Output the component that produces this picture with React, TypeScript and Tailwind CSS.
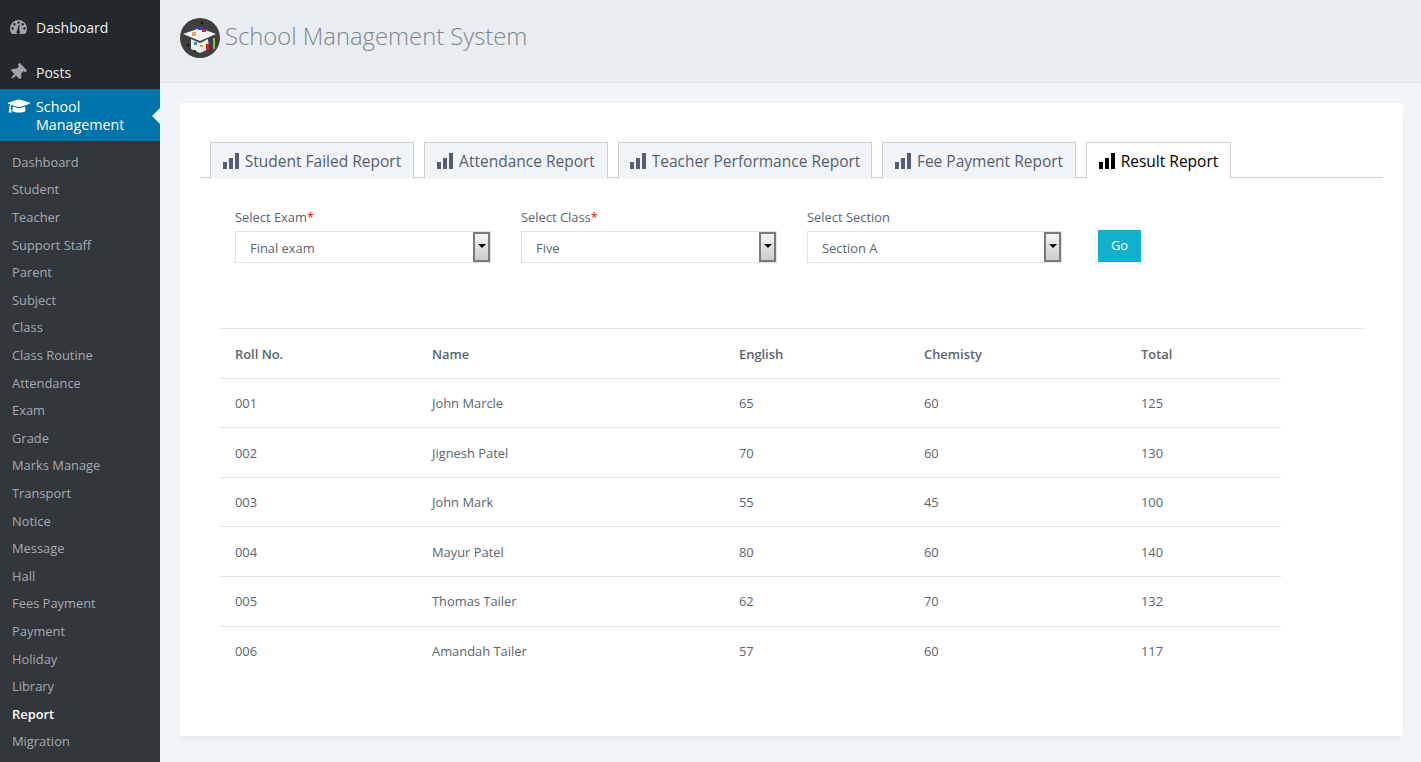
import React from 'react';
import { FaGraduationCap, FaThumbtack } from 'react-icons/fa';

const menu = ['Dashboard', 'Student', 'Teacher', 'Support Staff', 'Parent', 'Subject', 'Class', 'Class Routine', 'Attendance', 'Exam', 'Grade', 'Marks Manage', 'Transport', 'Notice', 'Message', 'Hall', 'Fees Payment', 'Payment', 'Holiday', 'Library', 'Report', 'Migration'];

const tabs = [
  { label: 'Student Failed Report', width: 'w-[204px]' },
  { label: 'Attendance Report', width: 'w-[184px]' },
  { label: 'Teacher Performance Report', width: 'w-[254px]' },
  { label: 'Fee Payment Report', width: 'w-[194px]' },
  { label: 'Result Report', width: 'w-[145px]', active: true },
];

const rows = [
  { height: 'h-[49px]', pad: 'pt-[2px]', cells: ['001', 'John Marcle', '65', '60', '125'] },
  { height: 'h-[50px]', pad: 'pt-[4px]', cells: ['002', 'Jignesh Patel', '70', '60', '130'] },
  { height: 'h-[49px]', pad: 'pt-[2px]', cells: ['003', 'John Mark', '55', '45', '100'] },
  { height: 'h-[50px]', pad: 'pt-[4px]', cells: ['004', 'Mayur Patel', '80', '60', '140'] },
  { height: 'h-[50px]', pad: 'pt-[2px]', cells: ['005', 'Thomas Tailer', '62', '70', '132'] },
  { height: 'h-[50px]', pad: 'pt-0', cells: ['006', 'Amandah Tailer', '57', '60', '117'] },
];

const BarsIcon = () => (
  <svg width="16" height="16" viewBox="0 0 16 16" className="shrink-0" fill="currentColor">
    <rect x="0" y="9" width="4" height="7" />
    <rect x="6" y="5" width="4" height="11" />
    <rect x="12" y="0" width="4" height="16" />
  </svg>
);

const GaugeIcon = () => (
  <svg width="17" height="14" viewBox="0 0 17 14" className="text-[#a0a5aa]">
    <path fill="currentColor" d="M8.5 0A8.5 8.5 0 0 0 0 8.5c0 1.9.6 3.6 1.6 5 .2.3.5.5.9.5h12c.4 0 .7-.2.9-.5 1-1.4 1.6-3.1 1.6-5A8.5 8.5 0 0 0 8.5 0z" />
    <g fill="#23282d">
      <circle cx="8.5" cy="2.6" r="1.2" />
      <circle cx="4.3" cy="4.3" r="1.2" />
      <circle cx="12.7" cy="4.3" r="1.2" />
      <circle cx="2.6" cy="8.5" r="1.2" />
      <circle cx="14.4" cy="8.5" r="1.2" />
      <path d="M7 10.8 8.6 5l1 .2-.3 5.4A1.8 1.8 0 1 1 7 10.8z" />
    </g>
  </svg>
);

const Logo = () => (
  <svg width="40" height="40" viewBox="0 0 40 40" className="shrink-0">
    <circle cx="20" cy="20" r="20" fill="#3f3f3f" />
    <path d="M3 16 20 10 36 16 20 23z" fill="#f4f4f4" />
    <path d="M11 21 20 25 28 21 29 31 20 35 11 31z" fill="#ededed" />
    <rect x="12" y="14" width="4" height="4" fill="#e8a27c" />
    <rect x="18" y="9" width="5" height="3" fill="#2a3fc0" />
    <rect x="22" y="11" width="4" height="3" fill="#d8202a" />
    <rect x="26" y="26" width="3" height="6" fill="#d8202a" />
    <rect x="33" y="20" width="2" height="11" fill="#8bc34a" />
    <rect x="14" y="24" width="3" height="3" fill="#2a8fc0" />
    <rect x="20" y="27" width="3" height="2" fill="#e8a020" />
    <circle cx="8" cy="27" r="1.5" fill="#1a1a1a" />
    <circle cx="22" cy="5" r="1.5" fill="#1a1a1a" />
    <circle cx="15" cy="33" r="1" fill="#1a1a1a" />
  </svg>
);

const SelectField = ({ label, value, required, width }: { label: string; value: string; required?: boolean; width: string }) => (
  <div className={width}>
    <div className="text-[12.9px] leading-[18px] text-[#5a6470] mb-[5px]">
      {label}
      {required && <span className="text-[#ff0000]">*</span>}
    </div>
    <div className="h-[32px] border border-[#dde2e4] flex items-center justify-between pl-[14px] bg-white">
      <span className="text-[12.9px] text-[#5a6470] pt-[3px]">{value}</span>
      <div className="w-[17px] h-[30px] border-2 border-[#7a7a7a] bg-gradient-to-b from-[#f4f4f4] to-[#cccccc] flex items-start justify-center pt-[10px]">
        <div className="w-0 h-0 border-l-[4px] border-r-[4px] border-t-[4px] border-l-transparent border-r-transparent border-t-black" />
      </div>
    </div>
  </div>
);

export default function App() {
  return (
    <div className="h-[762px] w-full flex overflow-hidden bg-[#f1f4f9] font-['Open_Sans',sans-serif]">
      {/* Sidebar */}
      <aside className="w-[160px] shrink-0 bg-[#32373c] flex flex-col">
        <div className="bg-[#23282d] h-[89px] text-[14px] text-[#eeeeee]">
          <div className="h-[54px] flex items-center pl-[10px] gap-[9px]">
            <GaugeIcon />
            <span>Dashboard</span>
          </div>
          <div className="h-[35px] flex items-center pl-[9px] gap-[10px] pt-[1px]">
            <FaThumbtack className="text-[#a0a5aa] rotate-45 w-[17px] h-[17px]" />
            <span>Posts</span>
          </div>
        </div>
        <div className="relative bg-[#0073aa] h-[52px] flex text-[14.3px] leading-[18px] text-white pl-[8px] pt-[9px] gap-[8px]">
          <FaGraduationCap className="w-[22px] h-[18px] -mt-[1px] shrink-0" />
          <span className="-ml-[2px]">School<br />Management</span>
          <div className="absolute right-0 top-[19px] w-0 h-0 border-y-[8px] border-r-[8px] border-y-transparent border-r-[#f1f4f9]" />
        </div>
        <nav className="pt-[7.9px]">
          {menu.map((item) => (
            <div key={item} className={`h-[27.6px] leading-[27.6px] pl-[12px] text-[12.9px] ${item === 'Report' ? 'text-white font-semibold' : 'text-[#a5aab0]'}`}>
              {item}
            </div>
          ))}
        </nav>
      </aside>

      <main className="flex-1 min-w-0">
        {/* Header */}
        <header className="h-[83px] bg-[#e9ecf1] border-b border-[#dfe2e6] flex items-center pl-[20px] pb-[7px] gap-[5px]">
          <Logo />
          <h1 className="text-[23.8px] font-light text-[#7b8794] -mt-[2px]">School Management System</h1>
        </header>

        {/* Card */}
        <section className="ml-[20px] mr-[18px] mt-[20px] h-[633px] bg-white shadow-[0_4px_8px_-3px_rgba(0,0,0,0.08)] px-[20px] pt-[39px]">
          <div className="flex gap-[10px] pl-[10px] border-b border-[#cccccc] h-[36px]">
            {tabs.map((tab) => (
              <div
                key={tab.label}
                className={`${tab.width} h-[37px] border border-[#cccccc] flex items-center justify-center gap-[6px] text-[15.5px] font-medium ${tab.active ? 'bg-white text-black border-b-white' : 'bg-[#f1f4f9] text-[#56606c] border-b-[#f1f4f9]'}`}
              >
                <BarsIcon />
                <span className="pt-[3px]">{tab.label}</span>
              </div>
            ))}
          </div>

          {/* Filters */}
          <div className="flex items-start pl-[35px] pt-[30px] gap-[30px]">
            <SelectField label="Select Exam" value="Final exam" required width="w-[256px]" />
            <SelectField label="Select Class" value="Five" required width="w-[256px]" />
            <SelectField label="Select Section" value="Section A" width="w-[255px]" />
            <button className="ml-[6px] mt-[22px] w-[43px] h-[32px] bg-[#12b0cd] text-white text-[12.9px]">Go</button>
          </div>

          {/* Table */}
          <div className="mx-[20px] mt-[65px] border-t border-[#dee2e6]">
            <table className="w-[1061px] table-fixed text-[12.9px] text-[#5a6470]">
              <colgroup>
                <col className="w-[197px]" />
                <col className="w-[307px]" />
                <col className="w-[185px]" />
                <col className="w-[217px]" />
                <col className="w-[155px]" />
              </colgroup>
              <thead>
                <tr className="h-[49px] border-b border-[#dee2e6]">
                  {['Roll No.', 'Name', 'English', 'Chemisty', 'Total'].map((h) => (
                    <th key={h} className="text-left font-semibold pl-[15px] pt-[3px]">{h}</th>
                  ))}
                </tr>
              </thead>
              <tbody>
                {rows.map((row, i) => (
                  <tr key={row.cells[0]} className={`${row.height} ${i < rows.length - 1 ? 'border-b border-[#dee2e6]' : ''}`}>
                    {row.cells.map((cell, j) => (
                      <td key={j} className={`pl-[15px] ${row.pad}`}>{cell}</td>
                    ))}
                  </tr>
                ))}
              </tbody>
            </table>
          </div>
        </section>
      </main>
    </div>
  );
}
